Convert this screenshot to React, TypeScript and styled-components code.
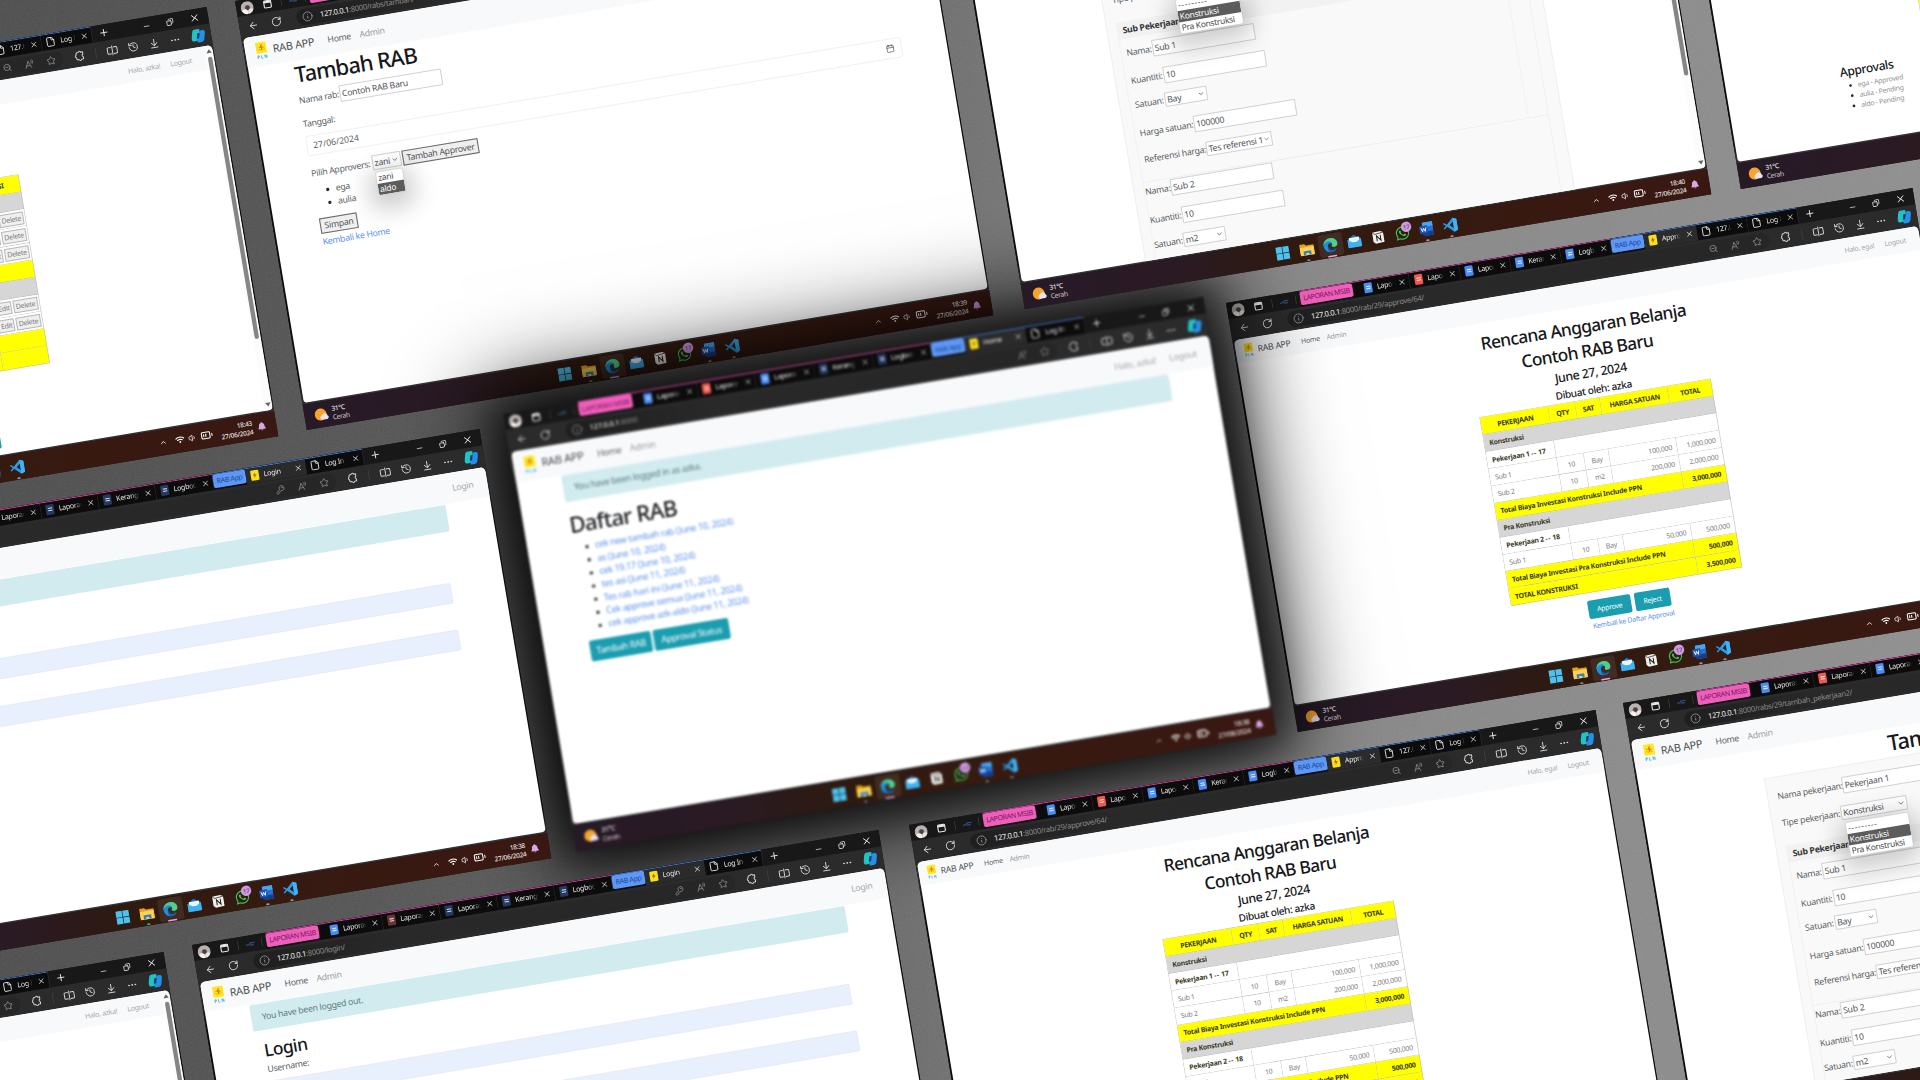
import React from "react";
import styled, { createGlobalStyle, css } from "styled-components";
import {
  ArrowLeft, RotateCw, Info, Star, History, ArrowDownToLine, Ellipsis,
  X, Plus, Minus, ZoomOut, File as FileIcon, ChevronUp, ChevronDown, Volume1, BatteryMedium,
  KeyRound, Copy, Calendar,
} from "lucide-react";
import { FaBell, FaWhatsapp, FaWifi } from "react-icons/fa";

const Global = createGlobalStyle`
  html, body { margin: 0; padding: 0; background: #555; overflow: hidden; }
  * { box-sizing: border-box; }
`;

/* ---------- board ---------- */

const Board = styled.div`
  position: relative;
  width: 1920px;
  height: 1080px;
  overflow: hidden;
  background: linear-gradient(90deg, #4c4c4c 0%, #545454 22%, #6a6a6a 46%, #868686 66%, #8e8e8e 100%);
  font-family: "Noto Sans", "Open Sans", sans-serif;
  font-variant-ligatures: none;
`;

const Grain = styled.svg`
  position: absolute;
  inset: 0;
  width: 100%;
  height: 100%;
  opacity: 0.14;
`;

const Screen = styled.div<{ $x: number; $y: number; $scale?: number; $front?: boolean }>`
  position: absolute;
  left: ${(p) => p.$x}px;
  top: ${(p) => p.$y}px;
  width: 1280px;
  height: 800px;
  display: flex;
  flex-direction: column;
  background: #141414;
  transform-origin: 0 0;
  transform: rotate(-9.5deg) scale(${(p) => p.$scale ?? 0.5438});
  letter-spacing: -0.03em;
  color: #212529;
  ${(p) =>
    p.$front &&
    css`
      box-shadow: 0 0 150px 34px rgba(0, 0, 0, 0.92), 0 0 60px 20px rgba(0, 0, 0, 0.45);
      filter: blur(1.5px);
    `}
`;

/* ---------- browser chrome ---------- */

const TabStrip = styled.div`
  height: 30px;
  display: flex;
  align-items: stretch;
  background: #181818;
  color: #e8e8e8;
  padding-left: 8px;
`;

const Avatar = styled.div`
  width: 24px;
  height: 24px;
  margin-top: 4px;
  border-radius: 50%;
  background:
    radial-gradient(circle at 28% 84%, #f6f0ee 0 20%, transparent 26%),
    radial-gradient(circle at 76% 80%, #efe2de 0 16%, transparent 22%),
    radial-gradient(circle at 52% 50%, #4a4040 0 18%, #7d7472 26%, transparent 34%),
    #b9b3b3;
`;

const StripCell = styled.div<{ $w: number }>`
  width: ${(p) => p.$w}px;
  display: flex;
  align-items: center;
  justify-content: center;
`;

const Sep = styled.div<{ $h?: number }>`
  width: 1px;
  height: ${(p) => p.$h ?? 16}px;
  align-self: center;
  background: #4a4a4a;
`;

const Group = styled.div<{ $color: string; $gap?: number }>`
  display: flex;
  border-top: 2px solid ${(p) => p.$color};
  background: #0c0c0c;
  margin-left: ${(p) => p.$gap ?? 0}px;
`;

const Pill = styled.div<{ $w: number; $mr?: number; $bg: string; $fg: string }>`
  width: ${(p) => p.$w}px;
  height: 25px;
  margin-right: ${(p) => p.$mr ?? 0}px;
  border-radius: 4px;
  background: ${(p) => p.$bg};
  color: ${(p) => p.$fg};
  font-size: 13px;
  line-height: 25px;
  text-align: center;
  letter-spacing: -0.05em;
  white-space: nowrap;
`;

const TabBox = styled.div<{ $w: number; $active?: boolean }>`
  width: ${(p) => p.$w}px;
  display: flex;
  align-items: center;
  padding: 0 6px 2px 9px;
  background: ${(p) => (p.$active ? "#2b2b2b" : "#0c0c0c")};
  border-right: 1px solid ${(p) => (p.$active ? "#2b2b2b" : "#3a3a3a")};
  font-size: 13px;
  gap: 9px;
`;

const TabTitle = styled.span`
  flex: 1;
  min-width: 0;
  overflow: hidden;
  white-space: nowrap;
  -webkit-mask-image: linear-gradient(90deg, #000 65%, transparent);
  mask-image: linear-gradient(90deg, #000 65%, transparent);
`;

const Favicon = styled.span<{ $bg: string }>`
  width: 15px;
  height: 19px;
  flex: none;
  border-radius: 2px;
  background: ${(p) => p.$bg};
  display: flex;
  flex-direction: column;
  justify-content: center;
  align-items: center;
  gap: 2px;
  i {
    width: 8px;
    height: 2px;
    background: rgba(255, 255, 255, 0.8);
  }
`;

const WinButtons = styled.div`
  margin-left: auto;
  display: flex;
  align-items: center;
  width: 136px;
  justify-content: space-between;
  padding: 2px 15px 0 14px;
`;

const Toolbar = styled.div`
  height: 39.5px;
  display: flex;
  align-items: center;
  background: #2b2b2b;
  color: #d6d6d6;
`;

const Address = styled.div`
  width: 899px;
  height: 30px;
  margin-left: 20px;
  border-radius: 15px;
  background: linear-gradient(90deg, #1f1f1f, #292929 30%, #262626);
  display: flex;
  align-items: center;
  padding: 0 14px 0 11px;
  font-size: 14px;
  color: #8b8b8b;
  b {
    font-weight: 400;
    color: #f2f2f2;
  }
  span {
    margin-left: 13px;
    flex: 1;
    white-space: nowrap;
    letter-spacing: -0.04em;
  }
`;

const AddressIcons = styled.div`
  display: flex;
  gap: 23px;
  align-items: center;
  color: #8f8f8f;
`;

const Tools = styled.div`
  flex: 1;
  display: flex;
  align-items: center;
  justify-content: space-between;
  padding: 0 9px 0 20px;
`;

const Page = styled.div`
  position: relative;
  flex: none;
  height: 680.5px;
  margin: 0 2px 0 3px;
  border-radius: 9px 9px 7px 7px;
  overflow: hidden;
  background: #fff;
`;

const PageWrap = styled.div`
  flex: none;
  background: linear-gradient(180deg, #2b2b2b 0 30px, #0c0c0c 80px 640px, #333);
`;

const Frame = styled.div`
  height: 3px;
  background: #333;
`;

/* ---------- taskbar ---------- */

const Taskbar = styled.div`
  flex: 1;
  display: flex;
  align-items: center;
  color: #fff;
  background: linear-gradient(90deg, #261a27 0%, #2a1a24 22%, #2e1a10 38%, #361a10 60%, #3a1812 100%);
`;

const Weather = styled.div`
  width: 463px;
  display: flex;
  align-items: center;
  gap: 6px;
  padding-left: 18px;
  font-size: 12.5px;
  line-height: 15.5px;
  letter-spacing: -0.05em;
  small {
    display: block;
    font-size: 12.5px;
    color: #cfc6cc;
  }
`;

const AppSlot = styled.div<{ $on?: boolean; $dot?: string }>`
  width: 44.5px;
  height: 42px;
  display: flex;
  align-items: center;
  justify-content: center;
  position: relative;
  border-radius: 5px;
  background: ${(p) => (p.$on ? "rgba(255,255,255,.08)" : "none")};
  &::after {
    content: "";
    position: absolute;
    bottom: -1px;
    left: 50%;
    width: ${(p) => (p.$on ? 17 : 6)}px;
    margin-left: ${(p) => (p.$on ? -8 : -3)}px;
    height: 3px;
    border-radius: 2px;
    background: ${(p) => p.$dot ?? "transparent"};
  }
`;

const CountBadge = styled.span`
  position: absolute;
  top: 1px;
  right: 4px;
  width: 19px;
  height: 19px;
  border-radius: 50%;
  background: #cf9be0;
  color: #4d2a5b;
  font-size: 11px;
  line-height: 19px;
  text-align: center;
`;

const Tray = styled.div`
  margin-left: auto;
  display: flex;
  align-items: center;
  gap: 7px;
  padding-right: 19px;
  font-size: 12px;
  line-height: 16px;
  text-align: right;
  letter-spacing: -0.04em;
`;

const Clock = styled.div`
  width: 64px;
  margin: 0 2px 0 3px;
`;

const WinLogo = () => (
  <svg width="26" height="26" viewBox="0 0 26 26">
    <g fill="#4cc2f1">
      <rect x="1" y="1" width="11.4" height="11.4" /><rect x="13.6" y="1" width="11.4" height="11.4" />
      <rect x="1" y="13.6" width="11.4" height="11.4" /><rect x="13.6" y="13.6" width="11.4" height="11.4" />
    </g>
  </svg>
);
const FolderLogo = () => (
  <svg width="28" height="26" viewBox="0 0 28 26">
    <path d="M1 3h9l3 3h14v18H1z" fill="#e3a21a" />
    <path d="M1 9h26v15H1z" fill="#ffd04f" />
    <path d="M7 16h14v8h-4v-4h-6v4H7z" fill="#2f7fd0" />
  </svg>
);
const EdgeLogo = () => (
  <svg width="28" height="28" viewBox="0 0 28 28">
    <path d="M1 14C1 6 7 1 14 1c8 0 13 5 13 11 0 4-3 6-7 6-3 0-4-1-4-3 0-1 1-1 1-3s-2-4-5-4C6 8 2 12 1 14z" fill="#4fd08a" />
    <path d="M1 14C2 9 6 6 11 6c4 0 6 3 6 6-1-1-2-2-4-2-3 0-5 3-4 7 1 5 6 8 11 6 2-1 3-1 4-2-2 4-6 6-10 6C7 27 1 21 1 14z" fill="#1b8fe0" />
    <path d="M9 17c1 5 6 8 11 6 2-1 3-1 4-2-2 4-6 6-10 6-5-1-7-6-5-10z" fill="#0f5fb5" />
  </svg>
);
const MailLogo = () => (
  <svg width="27" height="26" viewBox="0 0 27 26">
    <path d="M1 9 13.500 1 26 9v15H1z" fill="#1976c9" />
    <path d="M4 6h19v9H4z" fill="#eaf6ff" />
    <path d="M1 9l12.500 8L26 9v15H1z" fill="#3db3f2" />
  </svg>
);
const NotionLogo = () => (
  <svg width="22" height="24" viewBox="0 0 22 24">
    <path d="M1 2 16 1l5 3v18l-16 1-4-4z" fill="#f3f1ee" />
    <path d="M8 19V9l7 9V8" fill="none" stroke="#161616" strokeWidth="1.800" />
    <path d="M1 2l4 4 16-2" fill="none" stroke="#161616" strokeWidth="1.200" />
  </svg>
);
const WordLogo = () => (
  <svg width="27" height="27" viewBox="0 0 27 27">
    <rect x="7" y="1" width="19" height="25" rx="2" fill="#2a6fd0" />
    <rect x="7" y="1" width="19" height="8" fill="#48a5f0" />
    <rect x="7" y="18" width="19" height="8" fill="#123f8a" />
    <rect x="1" y="7" width="15" height="14" rx="1.500" fill="#1b55b5" />
    <path d="M4 10.500l2 7 2.500-6 2.500 6 2-7" fill="none" stroke="#fff" strokeWidth="1.600" />
  </svg>
);
const CodeLogo = () => (
  <svg width="28" height="28" viewBox="0 0 28 28">
    <path d="M20 1l7 3v20l-7 3L8 16l-5 4-2-1.500L6 14 1 9.500 3 8l5 4zM20 8l-7 6 7 6z" fill="#2a9bea" fillRule="evenodd" />
    <path d="M20 1l7 3v20l-7 3z" fill="#3fb3f7" />
  </svg>
);
const SunCloud = () => (
  <svg width="27" height="27" viewBox="0 0 27 27">
    <circle cx="12" cy="13" r="11" fill="#f7a32c" />
    <path d="M13 23a4.500 4.500 0 0 1 1-8.500 5.500 5.500 0 0 1 10 2A3.500 3.500 0 0 1 23 23z" fill="#e6e2f2" />
  </svg>
);
const Copilot = () => (
  <svg width="29" height="29" viewBox="0 0 27 27">
    <path d="M8 2h7c3 0 2 3 1 6l-3 10c-1 3-3 4-6 4H5c-4 0-4-4-3-8l2-8c1-3 2-4 4-4z" fill="#22c3c6" />
    <path d="M20 5h2c4 0 4 4 3 7l-2 8c-1 4-3 5-6 5h-5c-2 0-2-3-1-6l4-10c1-3 2-4 5-4z" fill="#2490e6" />
    <path d="M12.500 9h4l-2.500 9h-4z" fill="#123a5c" />
  </svg>
);
const ReadAloud = () => (
  <svg width="18" height="18" viewBox="0 0 18 18" fill="none" stroke="currentColor" strokeWidth="1.400">
    <path d="M2 16 7.500 3 13 16M4 11.500h7M12 2c1.600 1.600 1.600 4 0 5.600M14.500 1c2 2 2 5.400 0 7.600" />
  </svg>
);
const TabActions = () => (
  <svg width="18" height="18" viewBox="0 0 18 18" fill="none" stroke="currentColor" strokeWidth="2">
    <rect x="2.500" y="3" width="13" height="13" rx="2" />
    <path d="M2.500 5.500h13" strokeWidth="4" />
  </svg>
);
const Extension = () => (
  <svg width="21" height="21" viewBox="0 0 21 21" fill="none" stroke="currentColor" strokeWidth="1.800" strokeLinejoin="round">
    <path d="M8 4.500a2.600 2.600 0 0 1 5 0h3.500v4a2.600 2.600 0 0 0 0 5v4H13a2.600 2.600 0 0 1-5 0H6a2 2 0 0 1-2-2v-2a2.600 2.600 0 0 1 0-5v-2a2 2 0 0 1 2-2z" />
  </svg>
);
const SplitView = () => (
  <svg width="22" height="20" viewBox="0 0 22 20" fill="none" stroke="currentColor" strokeWidth="1.800">
    <path d="M9 4H4a2 2 0 0 0-2 2v8a2 2 0 0 0 2 2h5M13 4h5a2 2 0 0 1 2 2v8a2 2 0 0 1-2 2h-5M11 1v18" />
  </svg>
);
const PlnLogo = ({ size }: { size: number }) => (
  <svg width={size * 0.8} height={size * 1.25} viewBox="0 0 24 38">
    <rect x="0" y="0" width="24" height="25" fill="#ffe81a" />
    <path d="M13 5 8 13h4l-2 8 7-10h-4l2-6z" fill="#d9622f" />
    <path d="M4 12c3-2 5 2 8 0s5 2 8 0M4 17c3-2 5 2 8 0s5 2 8 0" stroke="#d9a21a" strokeWidth="1.500" fill="none" />
    <path d="M2 37v-7h3v3H2M10 30v7h4M18 37v-7l4 7v-7" stroke="#2aa7dd" strokeWidth="1.600" fill="none" />
  </svg>
);

const FAV = { blue: "#4a8df5", red: "#f0584f", dim: "#243a63", dimred: "#6b3434" };

interface ChromeProps {
  url: string;
  pitch: number;
  favs: string[];
  titles: string[];
  last: string[];
  time: string;
  leading?: "key" | "zoom" | "none";
  scroll?: number;
  children: React.ReactNode;
}

const ScrollTrack = styled.div`
  position: absolute;
  top: 0;
  right: 0;
  bottom: 0;
  width: 15px;
  display: flex;
  flex-direction: column;
  align-items: center;
  background: #fcfcfc;
  border-radius: 0 8px 6px 0;
`;
const ScrollArrow = styled.i<{ $down?: boolean }>`
  margin: 7px 0;
  border: 5px solid transparent;
  border-${(p) => (p.$down ? "top" : "bottom")}: 7px solid #666;
  border-${(p) => (p.$down ? "bottom" : "top")}: 0;
`;
const Thumb = styled.div<{ $h: number }>`
  width: 8px;
  height: ${(p) => p.$h}px;
  border-radius: 4px;
  background: #858585;
  margin-bottom: auto;
`;

function BrowserWindow({ url, pitch, favs, titles, last, time, leading = "key", scroll, children }: ChromeProps) {
  return (
    <>
      <TabStrip>
        <Avatar />
        <StripCell $w={51}>
          <TabActions />
        </StripCell>
        <Sep />
        <StripCell $w={43}>
          <svg width="20" height="14" viewBox="0 0 20 14"><path d="M2 9h5l3-3h8M9 10h7" stroke="#34578f" strokeWidth="2" fill="none" /></svg>
        </StripCell>
        <Sep />
        <Group $color="#c63f97" $gap={8}>
          <Pill $w={98} $mr={12} $bg="#ee5fbb" $fg="#7c1858">LAPORAN MSIB</Pill>
          {titles.map((t, i) => (
            <TabBox key={i} $w={pitch}>
              <Favicon $bg={favs[i]}><i /><i /></Favicon>
              <TabTitle>{t}</TabTitle>
              <X size={15} />
            </TabBox>
          ))}
        </Group>
        <Group $color="#3f72c9">
          <Pill $w={61} $bg="#5e97f6" $fg="#1d4796">RAB App</Pill>
          <TabBox $w={pitch + 5} $active>
            <Favicon $bg="#f7e01c"><svg width="9" height="11" viewBox="0 0 9 11"><path d="M5 0 1 6h3l-1 5 5-7H5z" fill="#b4551f" /></svg></Favicon>
            <TabTitle>{last[0]}</TabTitle>
            <X size={15} />
          </TabBox>
          {last.slice(1).map((t) => (
            <TabBox key={t} $w={pitch}>
              <FileIcon size={19} strokeWidth={2} style={{ flex: "none", marginLeft: -2 }} />
              <TabTitle>{t}</TabTitle>
              <X size={15} />
            </TabBox>
          ))}
        </Group>
        <StripCell $w={44}>
          <Plus size={20} />
        </StripCell>
        <WinButtons>
          <Minus size={15} />
          <Copy size={14} strokeWidth={2.6} style={{ transform: "scaleX(-1)" }} />
          <X size={20} />
        </WinButtons>
      </TabStrip>
      <Toolbar>
        <StripCell $w={52}><ArrowLeft size={20} /></StripCell>
        <StripCell $w={34}><RotateCw size={20} /></StripCell>
        <Address>
          <Info size={20} />
          <span><b>127.0.0.1</b>:8000{url}</span>
          <AddressIcons>
            {leading === "key" && <KeyRound size={17} />}
            {leading === "zoom" && <ZoomOut size={17} />}
            <ReadAloud />
            <Star size={18} />
          </AddressIcons>
        </Address>
        <Tools>
          <Extension />
          <Sep $h={20} />
          <SplitView />
          <History size={20} />
          <ArrowDownToLine size={20} />
          <Ellipsis size={20} />
          <Copilot />
        </Tools>
      </Toolbar>
      <PageWrap>
        <Page>
          {children}
          {scroll && (
            <ScrollTrack>
              <ScrollArrow />
              <Thumb $h={scroll} />
              <ScrollArrow $down />
            </ScrollTrack>
          )}
        </Page>
      </PageWrap>
      <Frame />
      <Taskbar>
        <Weather>
          <SunCloud />
          <div>31°C<small>Cerah</small></div>
        </Weather>
        <AppSlot><WinLogo /></AppSlot>
        <AppSlot $dot="#8f8f8f"><FolderLogo /></AppSlot>
        <AppSlot $on $dot="#e9a2dc"><EdgeLogo /></AppSlot>
        <AppSlot><MailLogo /></AppSlot>
        <AppSlot><NotionLogo /></AppSlot>
        <AppSlot><FaWhatsapp size={28} color="#35c759" /><CountBadge>17</CountBadge></AppSlot>
        <AppSlot $dot="#9f9f9f"><WordLogo /></AppSlot>
        <AppSlot $dot="#9f9f9f"><CodeLogo /></AppSlot>
        <Tray>
          <ChevronUp size={15} style={{ marginRight: 8 }} />
          <FaWifi size={17} />
          <Volume1 size={16} />
          <BatteryMedium size={23} />
          <Clock>{time}<br />27/06/2024</Clock>
          <FaBell size={16} color="#d9a7e6" />
        </Tray>
      </Taskbar>
    </>
  );
}

/* ---------- web pages ---------- */

const Nav = styled.div<{ $z: number; $bar?: boolean }>`
  height: ${(p) => 56 * p.$z}px;
  font-size: ${(p) => 16 * p.$z}px;
  display: flex;
  align-items: center;
  background: #f8f9fb;
  color: #8a8d90;
  padding: 0 ${(p) => (p.$bar ? 39 : 26)}px 0 ${(p) => 20 * p.$z}px;
`;
const Brand = styled.span`
  font-size: 1.25em;
  color: #4a4d50;
  margin: 0 1.25em 0 0.55em;
`;
const Link = styled.span<{ $on?: boolean }>`
  color: ${(p) => (p.$on ? "#5c5f62" : "#9a9da0")};
  margin-right: 1em;
`;
const NavRight = styled.span`
  margin-left: auto;
  display: flex;
  gap: 1.5em;
  color: #a6a8aa;
`;

function NavBar({ z = 1, right, bar }: { z?: number; right: string[]; bar?: boolean }) {
  return (
    <Nav $z={z} $bar={bar}>
      <PlnLogo size={25 * z} />
      <Brand>RAB APP</Brand>
      <Link $on>Home</Link>
      <Link>Admin</Link>
      <NavRight>{right.map((r) => <span key={r}>{r}</span>)}</NavRight>
    </Nav>
  );
}

const Container = styled.div<{ $left: number; $w: number }>`
  margin-left: ${(p) => p.$left}px;
  width: ${(p) => p.$w}px;
`;

const Heading = styled.div<{ $size: number; $h: number; $mt: number; $center?: boolean }>`
  margin-top: ${(p) => p.$mt}px;
  height: ${(p) => p.$h}px;
  line-height: ${(p) => p.$h}px;
  font-size: ${(p) => p.$size}px;
  font-weight: 500;
  letter-spacing: ${(p) => (p.$center ? -0.038 : -0.034)}em;
  color: #16181b;
  white-space: nowrap;
  text-align: ${(p) => (p.$center ? "center" : "left")};
`;

const Row = styled.div<{ $mt: number; $h: number; $size?: number }>`
  margin-top: ${(p) => p.$mt}px;
  height: ${(p) => p.$h}px;
  display: flex;
  align-items: center;
  font-size: ${(p) => p.$size ?? 16}px;
  color: #5a5e64;
  white-space: nowrap;
`;

const Label = styled.span<{ $w: number }>`
  width: ${(p) => p.$w}px;
  flex: none;
`;

const Field = styled.span<{ $w: number; $h?: number }>`
  width: ${(p) => p.$w}px;
  height: ${(p) => p.$h ?? 30}px;
  flex: none;
  border: 1.5px solid #b0b0b0;
  background: #fff;
  display: flex;
  align-items: center;
  justify-content: space-between;
  padding: 0 3px;
  color: #505357;
`;

const GreyButton = styled.span<{ $w: number; $ml?: number }>`
  width: ${(p) => p.$w}px;
  height: 100%;
  margin-left: ${(p) => p.$ml ?? 0}px;
  border: 2px solid #6c6c6c;
  background: #efefef;
  color: #505357;
  display: flex;
  align-items: center;
  justify-content: center;
`;

const Teal = styled.span<{ $w: number; $small?: boolean }>`
  width: ${(p) => p.$w}px;
  height: 100%;
  border-radius: 4px;
  background: #1b9db0;
  color: #fff;
  display: flex;
  align-items: center;
  justify-content: center;
  margin-right: ${(p) => (p.$small ? 7 : 4)}px;
`;

const Alert = styled.div<{ $mt?: number }>`
  margin: ${(p) => p.$mt ?? 1}px 0 0 82px;
  width: 1110px;
  height: 49px;
  line-height: 48px;
  padding-left: 20px;
  background: #d1ebef;
  color: #5b7c82;
  border-radius: 3px;
  font-size: 16px;
`;

const BlueText = styled.span`
  color: #5a90ec;
`;

const Bullets = styled.ul<{ $mt: number; $lh: number; $size: number; $color?: string; $pl?: number }>`
  margin: ${(p) => p.$mt}px 0 0;
  padding-left: ${(p) => p.$pl ?? 40}px;
  font-size: ${(p) => p.$size}px;
  line-height: ${(p) => p.$lh}px;
  color: ${(p) => p.$color ?? "#5a5e64"};
  li::marker {
    color: #26282b;
  }
`;

const Popup = styled.div<{ $x: number; $y: number; $w: number }>`
  position: absolute;
  left: ${(p) => p.$x}px;
  top: ${(p) => p.$y}px;
  width: ${(p) => p.$w}px;
  border: 1px solid #c4c4c4;
  border-radius: 4px;
  background: #fff;
  overflow: hidden;
  font-size: 15.5px;
  line-height: 21px;
  color: #45484c;
  box-shadow: 0 12px 44px 14px rgba(0, 0, 0, 0.2);
  div {
    padding-left: 3px;
    white-space: nowrap;
  }
`;
const Picked = styled.div`
  background: #5c5c5c;
  color: #fff;
`;
const Dashes = styled.div`
  letter-spacing: 0.07em;
`;

const AutoField = styled.div<{ $mt: number }>`
  margin-top: ${(p) => p.$mt}px;
  height: 38px;
  width: 1081px;
  background: #e8f0fe;
  border: 1px solid #dde4f2;
  border-radius: 3px;
`;

function LoginPage() {
  return (
    <>
      <NavBar right={["Login"]} />
      <Alert>You have been logged out.</Alert>
      <Container $left={96} $w={1084}>
        <Heading $size={32} $h={38} $mt={18.5}>Login</Heading>
        <Row $mt={3.5} $h={24}>Username:</Row>
        <AutoField $mt={10.5} />
        <Row $mt={14.5} $h={24}>Password:</Row>
        <AutoField $mt={10.5} />
        <Row $mt={16} $h={38}><Teal $w={68}>Login</Teal></Row>
      </Container>
    </>
  );
}

const RABS = [
  "cek new tambah rab (June 10, 2024)", "as (June 10, 2024)", "cek 19.17 (June 10, 2024)",
  "tes asi (June 11, 2024)", "Tes rab hari ini (June 11, 2024)",
  "Cek approve semua (June 11, 2024)", "cek approve azk-aldo (June 11, 2024)",
];

function ListPage() {
  return (
    <>
      <NavBar right={["Halo, azka!", "Logout"]} />
      <Alert $mt={1}>You have been logged in as azka.</Alert>
      <Container $left={82} $w={1110}>
        <Heading $size={40} $h={48} $mt={18}>Daftar RAB</Heading>
        <Bullets $mt={6.5} $lh={24} $size={16}>
          {RABS.map((r) => <li key={r}><BlueText>{r}</BlueText></li>)}
        </Bullets>
        <Row $mt={13} $h={38}>
          <Teal $w={112}>Tambah RAB</Teal>
          <Teal $w={138}>Approval Status</Teal>
        </Row>
      </Container>
    </>
  );
}

const DateField = styled.div`
  margin-top: 10.5px;
  height: 37px;
  border: 1px solid #e2e5e9;
  border-radius: 4px;
  display: flex;
  align-items: center;
  justify-content: space-between;
  padding: 0 12px 0 11px;
  font-size: 16px;
  letter-spacing: 0;
  color: #5a5e64;
`;

function AddRabPage() {
  return (
    <>
      <NavBar right={["Halo, azka!", "Logout"]} />
      <Container $left={83} $w={1109}>
        <Heading $size={40} $h={48} $mt={2.5}>Tambah RAB</Heading>
        <Row $mt={9} $h={30}><Label $w={76}>Nama rab:</Label><Field $w={190}>Contoh RAB Baru</Field></Row>
        <Row $mt={17} $h={24}>Tanggal:</Row>
        <DateField>27/06/2024<Calendar size={16} /></DateField>
        <Row $mt={18} $h={28}>
          <Label $w={114}>Pilih Approvers:</Label>
          <Field $w={53} $h={27}>zani<ChevronDown size={14} /></Field>
          <GreyButton $w={142} $ml={3}>Tambah Approver</GreyButton>
        </Row>
        <Bullets $mt={7} $lh={24.5} $size={16}><li>ega</li><li>aulia</li></Bullets>
        <Row $mt={14} $h={29}><GreyButton $w={70}>Simpan</GreyButton></Row>
        <Row $mt={2} $h={24}><BlueText>Kembali ke Home</BlueText></Row>
      </Container>
      <Popup $x={199} $y={283} $w={51}><div>zani</div><Picked>aldo</Picked></Popup>
    </>
  );
}

const OuterBox = styled.div`
  margin: 3px 0 0 230px;
  width: 801px;
  height: 620px;
  border: 1px solid #e6e6e6;
  background: #f9f9f9;
  padding: 20.5px 24px 0 18px;
`;
const SubBox = styled.div`
  margin-top: 30px;
  border: 1px solid #ececec;
`;
const SubHead = styled.div`
  height: 30px;
  line-height: 28px;
  padding-left: 9px;
  background: #f2f2f2;
  font-size: 16px;
  font-weight: 700;
  color: #33363a;
`;
const SubForm = styled.div<{ $pl: number; $inner?: boolean }>`
  padding: 0.1px 0 28px ${(p) => p.$pl}px;
  margin-right: ${(p) => (p.$inner ? 36 : 0)}px;
  border-right: ${(p) => (p.$inner ? "1px solid #ececec" : "none")};
`;
const Line = styled.div`
  height: 1px;
  background: #e8e8e8;
`;

function FormPage({ bar }: { bar?: boolean }) {
  return (
    <>
      <NavBar right={["Halo, azka!", "Logout"]} bar={bar} />
      <Container $left={0} $w={1260}>
        <Heading $size={40} $h={48} $mt={3} $center>Tambah Pekerjaan</Heading>
      </Container>
      <OuterBox>
        <Row $mt={0} $h={30}><Label $w={121}>Nama pekerjaan:</Label><Field $w={190}>Pekerjaan 1</Field></Row>
        <Row $mt={21.5} $h={26}><Label $w={110}>Tipe pekerjaan:</Label><Field $w={123} $h={26}>Konstruksi<ChevronDown size={14} /></Field></Row>
        <SubBox>
          <SubHead>Sub Pekerjaan</SubHead>
          <SubForm $pl={9} $inner>
            <Row $mt={11} $h={30}><Label $w={49}>Nama:</Label><Field $w={190}>Sub 1</Field></Row>
            <Row $mt={22} $h={30}><Label $w={61}>Kuantiti:</Label><Field $w={190}>10</Field></Row>
            <Row $mt={17.5} $h={26}><Label $w={56}>Satuan:</Label><Field $w={78} $h={26}>Bay<ChevronDown size={14} /></Field></Row>
            <Row $mt={25} $h={30}><Label $w={101}>Harga satuan:</Label><Field $w={190}>100000</Field></Row>
            <Row $mt={20.5} $h={26}><Label $w={116}>Referensi harga:</Label><Field $w={122} $h={26}>Tes referensi 1<ChevronDown size={14} /></Field></Row>
          </SubForm>
          <Line />
          <SubForm $pl={1}>
            <Row $mt={2.5} $h={30}><Label $w={48}>Nama:</Label><Field $w={190}>Sub 2</Field></Row>
            <Row $mt={22.5} $h={30}><Label $w={60}>Kuantiti:</Label><Field $w={190}>10</Field></Row>
            <Row $mt={18.5} $h={26}><Label $w={55}>Satuan:</Label><Field $w={78} $h={26}>m2<ChevronDown size={14} /></Field></Row>
          </SubForm>
        </SubBox>
      </OuterBox>
      <Popup $x={363} $y={214} $w={118}><Dashes>---------</Dashes><Picked>Konstruksi</Picked><div>Pra Konstruksi</div></Popup>
    </>
  );
}

/* ---------- budget table ---------- */

const Table = styled.div<{ $cols: string }>`
  display: grid;
  grid-template-columns: ${(p) => p.$cols};
  grid-auto-rows: 31.9px;
  width: max-content;
  margin: 5.5px auto 0;
  border-left: 1px solid #b9b9b9;
  border-top: 1px solid #b9b9b9;
  font-size: 12.8px;
`;
const Cell = styled.div<{ $bg?: string; $b?: boolean; $align?: string; $span?: number }>`
  grid-column: span ${(p) => p.$span ?? 1};
  background: ${(p) => p.$bg ?? "#fff"};
  font-weight: ${(p) => (p.$b ? 700 : 400)};
  justify-content: ${(p) => p.$align ?? "flex-start"};
  color: ${(p) => (p.$b ? "#3a3a26" : "#7a7d80")};
  border-right: 1px solid #b9b9b9;
  border-bottom: 1px solid #b9b9b9;
  display: flex;
  align-items: center;
  gap: 4px;
  padding: 0 9px;
  white-space: nowrap;
`;
const ActionCell = styled(Cell)`
  padding: 0 3px;
`;
const MiniButton = styled.span`
  border: 1.5px solid #8a8a8a;
  background: #efefef;
  height: 23px;
  line-height: 20px;
  padding: 0 3px;
`;
const Dash = styled.span`
  letter-spacing: 0.08em;
  margin: 0 0 0 0;
`;

const Y = "#ffff00";
const G = "#d6d6d6";

function Budget({ actions }: { actions?: boolean }) {
  const cols = actions ? "123px 48px 46px 124px 81px 86px" : "127px 50px 46px 126px 81px";
  const x = actions ? 1 : 0;
  const act = (bg?: string, buttons?: boolean) =>
    actions ? (
      <ActionCell $bg={bg} $align="flex-end">
        {buttons && <><MiniButton>Edit</MiniButton><MiniButton>Delete</MiniButton></>}
      </ActionCell>
    ) : null;
  const sub = (name: string, unit: string, price: string, total: string) => (
    <>
      <Cell>{name}</Cell><Cell $align="center">10</Cell><Cell $align="center">{unit}</Cell>
      <Cell $align="flex-end">{price}</Cell><Cell $align="flex-end">{total}</Cell>{act(undefined, true)}
    </>
  );
  const total = (name: string, value: string) => (
    <><Cell $bg={Y} $b $span={4}>{name}</Cell><Cell $bg={Y} $b $align="flex-end">{value}</Cell>{act(Y)}</>
  );
  return (
    <Table $cols={cols}>
      {["PEKERJAAN", "QTY", "SAT", "HARGA SATUAN", "TOTAL"].map((h) => <Cell key={h} $bg={Y} $b $align="center">{h}</Cell>)}
      {actions && <Cell $bg={Y} $b $align="center">AKSI</Cell>}
      <Cell $bg={G} $b $span={5 + x}>Konstruksi</Cell>
      <Cell $b><span>Pekerjaan 1 <Dash>--</Dash> 17</span></Cell><Cell $span={4} />{act(undefined, true)}
      {sub("Sub 1", "Bay", "100,000", "1,000,000")}
      {sub("Sub 2", "m2", "200,000", "2,000,000")}
      {total("Total Biaya Investasi Konstruksi Include PPN", "3,000,000")}
      <Cell $bg={G} $b $span={5 + x}>Pra Konstruksi</Cell>
      <Cell $b><span>Pekerjaan 2 <Dash>--</Dash> 18</span></Cell><Cell $span={4} />{act(undefined, true)}
      {sub("Sub 1", "Bay", "50,000", "500,000")}
      {total("Total Biaya Investasi Pra Konstruksi Include PPN", "500,000")}
      {total("TOTAL KONSTRUKSI", "3,500,000")}
    </Table>
  );
}

const CenterRow = styled(Row)`
  justify-content: center;
  padding-left: 6px;
`;

function ApprovePage() {
  return (
    <>
      <NavBar z={0.8} right={["Halo, ega!", "Logout"]} />
      <Heading $size={32} $h={38.4} $mt={18} $center>Rencana Anggaran Belanja</Heading>
      <Heading $size={32} $h={38.4} $mt={6.4} $center>Contoh RAB Baru</Heading>
      <Heading $size={22.8} $h={27} $mt={7.5} $center>June 27, 2024</Heading>
      <Heading $size={18.6} $h={20} $mt={9} $center>Dibuat oleh: azka</Heading>
      <Budget />
      <CenterRow $mt={13.5} $h={34} $size={12.8}><Teal $w={80} $small>Approve</Teal><Teal $w={66} $small>Reject</Teal></CenterRow>
      <CenterRow $mt={4} $h={19} $size={12.8}><BlueText>Kembali ke Daftar Approval</BlueText></CenterRow>
    </>
  );
}

const Scrolled = styled.div<{ $by: number }>`
  margin-top: ${(p) => -p.$by}px;
  width: 1260px;
`;

function DetailPage({ by = 0 }: { by?: number }) {
  return (
    <Scrolled $by={by}>
      <NavBar z={0.8} right={["Halo, azka!", "Logout"]} />
      <Heading $size={32} $h={38} $mt={10} $center>Contoh RAB Baru</Heading>
      <Heading $size={22.4} $h={27} $mt={7} $center>June 27, 2024</Heading>
      <Heading $size={17.6} $h={20} $mt={24} $center>Dibuat oleh: azka</Heading>
      <Budget actions />
      <Container $left={212} $w={400}>
        <Heading $size={22.4} $h={27} $mt={36}>Approvals</Heading>
        <Bullets $mt={4} $lh={19.2} $size={12.8} $color="#8f9295" $pl={29}>
          <li>ega - Approved</li><li>aulia - Pending</li><li>aldo - Pending</li>
        </Bullets>
      </Container>
      <CenterRow $mt={-17} $h={33} $size={12.8}><Teal $w={285} $small>Tambah Pekerjaan</Teal></CenterRow>
    </Scrolled>
  );
}

/* ---------- window presets ---------- */

const wide = { pitch: 107, titles: ["Laporan", "Laporan", "Laporan", "Kerangka", "Logbook"] };
const narrow = {
  pitch: 94,
  titles: ["Lapora", "Lapora", "Lapora", "Keran", "Logbo"],
  favs: [FAV.blue, FAV.red, FAV.blue, FAV.blue, FAV.blue],
};
const dimmed = [FAV.blue, FAV.dimred, FAV.dim, FAV.dim, FAV.dim];

export default function App() {
  return (
    <Board>
      <Global />
      <Grain>
        <filter id="grain"><feTurbulence type="fractalNoise" baseFrequency="0.8" numOctaves="2" /><feColorMatrix type="saturate" values="0" /></filter>
        <rect width="100%" height="100%" filter="url(#grain)" />
      </Grain>

      <Screen $x={-480} $y={122}>
        <BrowserWindow {...narrow} url="/rabs/29/" last={["RAB", "127.0.0", "Log In"]} time="18:43" leading="zoom" scroll={526}><DetailPage /></BrowserWindow>
      </Screen>
      <Screen $x={235} $y={1}>
        <BrowserWindow {...wide} favs={dimmed} url="/rabs/tambah/" last={["Tambah", "Log In"]} time="18:39" leading="none"><AddRabPage /></BrowserWindow>
      </Screen>
      <Screen $x={1226} $y={302.5}>
        <BrowserWindow {...narrow} url="/rab/29/approve/64/" last={["Appro", "127.0", "Log In"]} time="18:42" leading="zoom"><ApprovePage /></BrowserWindow>
      </Screen>

      <Screen $x={502.5} $y={414} $scale={0.5545} $front>
        <BrowserWindow {...wide} favs={[FAV.blue, FAV.red, FAV.blue, FAV.dim, FAV.dim]} url="" last={["Home", "Log In"]} time="18:38" leading="none"><ListPage /></BrowserWindow>
      </Screen>

      <Screen $x={953} $y={-120}>
        <BrowserWindow {...wide} favs={dimmed} url="/rabs/29/tambah_pekerjaan2/" last={["Tambah", "Log In"]} time="18:40" leading="none" scroll={486}><FormPage bar /></BrowserWindow>
      </Screen>
      <Screen $x={1669} $y={-240}>
        <BrowserWindow {...narrow} url="/rabs/29/" last={["RAB", "127.0.0", "Log In"]} time="18:43" leading="zoom"><DetailPage by={29} /></BrowserWindow>
      </Screen>
      <Screen $x={-207} $y={543.5}>
        <BrowserWindow {...wide} favs={dimmed} url="/login/" last={["Login", "Log In"]} time="18:38"><LoginPage /></BrowserWindow>
      </Screen>
      <Screen $x={-523} $y={1067}>
        <BrowserWindow {...narrow} url="/rabs/29/" last={["RAB", "127.0.0", "Log In"]} time="18:43" leading="zoom" scroll={526}><DetailPage /></BrowserWindow>
      </Screen>
      <Screen $x={192} $y={945}>
        <BrowserWindow {...wide} favs={dimmed} url="/login/" last={["Login", "Log In"]} time="18:38"><LoginPage /></BrowserWindow>
      </Screen>
      <Screen $x={908.5} $y={824.5}>
        <BrowserWindow {...narrow} url="/rab/29/approve/64/" last={["Appro", "127.0", "Log In"]} time="18:42" leading="zoom"><ApprovePage /></BrowserWindow>
      </Screen>
      <Screen $x={1623} $y={703}>
        <BrowserWindow {...wide} favs={narrow.favs} url="/rabs/29/tambah_pekerjaan2/" last={["Tambah", "Log In"]} time="18:40" leading="none"><FormPage bar /></BrowserWindow>
      </Screen>
    </Board>
  );
}
